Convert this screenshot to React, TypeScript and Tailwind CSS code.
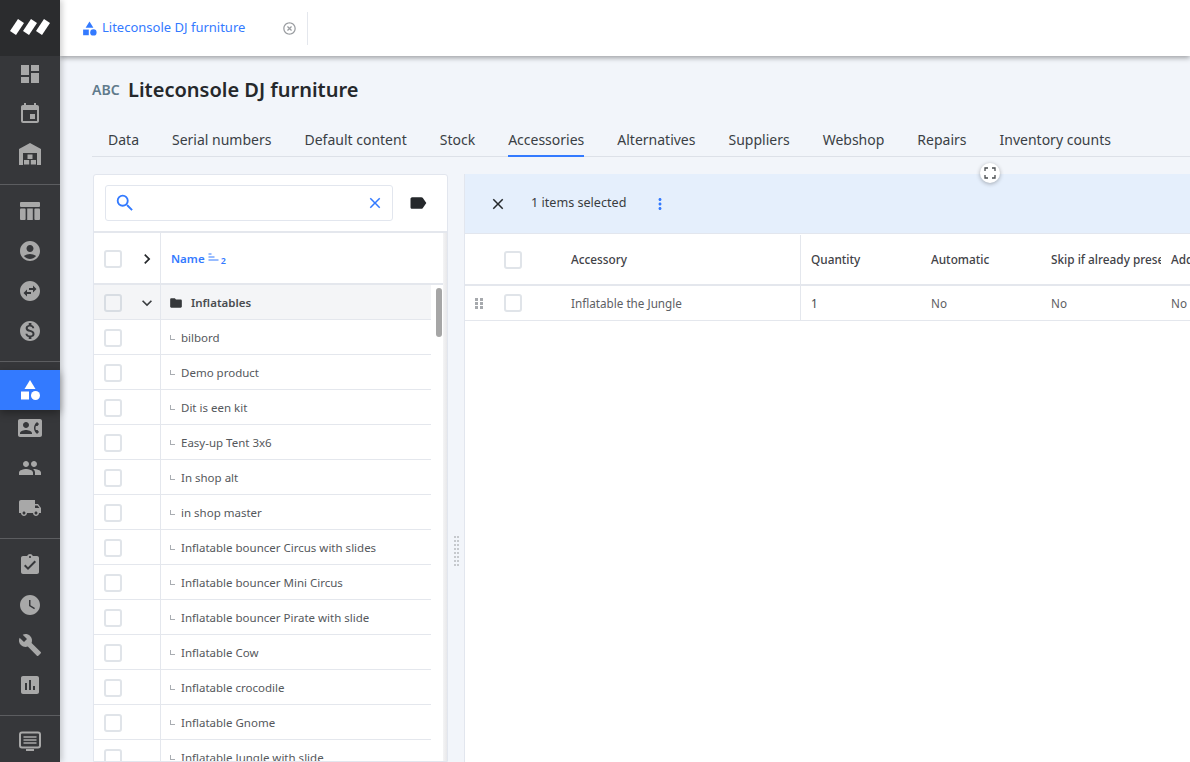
import {
  MdDashboard,
  MdEvent,
  MdAccountCircle,
  MdSwapHorizontalCircle,
  MdMonetizationOn,
  MdCategory,
  MdContactPhone,
  MdPeople,
  MdLocalShipping,
  MdAssignmentTurnedIn,
  MdWatchLater,
  MdBuild,
  MdAssessment,
  MdFolder,
  MdLabel,
  MdSearch,
  MdClose,
  MdMoreVert,
  MdHighlightOff,
  MdChevronRight,
  MdExpandMore,
} from "react-icons/md"

function WarehouseIcon({ className }: { className?: string }) {
  return (
    <svg viewBox="0 0 24 24" className={className} fill="currentColor">
      <path
        fillRule="evenodd"
        d="M12 1 L23 7 V23 H1 V7 Z M5 11 V23 H19 V11 Z"
      />
      <rect x="9.5" y="12.5" width="5" height="4.5" />
      <rect x="6" y="18" width="5.2" height="4.5" />
      <rect x="12.8" y="18" width="5.2" height="4.5" />
    </svg>
  )
}

function TableIcon({ className }: { className?: string }) {
  return (
    <svg viewBox="0 0 24 24" className={className} fill="currentColor">
      <rect x="2" y="3" width="20" height="5" rx="1" />
      <rect x="2" y="9.5" width="5.6" height="11.5" rx="1" />
      <rect x="9.2" y="9.5" width="5.6" height="11.5" />
      <rect x="16.4" y="9.5" width="5.6" height="11.5" rx="1" />
    </svg>
  )
}

function ScreenIcon({ className }: { className?: string }) {
  return (
    <svg viewBox="0 0 24 24" className={className} fill="none" stroke="currentColor">
      <rect x="2" y="3.5" width="20" height="15" rx="2" strokeWidth="2" />
      <path d="M5.5 8h13M5.5 11h13M5.5 14h13" strokeWidth="1.7" />
      <path d="M8 21h8" strokeWidth="2" />
    </svg>
  )
}

function NavItem({ icon: Icon, active }: { icon: any; active?: boolean }) {
  return (
    <div
      className={
        active
          ? "flex h-10 items-center justify-center bg-[#337aff] text-white shadow-[0_3px_8px_rgba(0,0,0,0.35)]"
          : "flex h-10 items-center justify-center text-[#a8a8a8]"
      }
    >
      <Icon className="h-6 w-6" />
    </div>
  )
}

function Sidebar() {
  return (
    <aside className="z-20 flex h-full w-[60px] shrink-0 flex-col bg-[#36373a] shadow-[2px_0_6px_rgba(0,0,0,0.2)]">
      <div className="z-10 flex h-[56px] shrink-0 items-center justify-center bg-[#2b2c2e]">
        <svg viewBox="0 0 60 56" className="h-[56px] w-[60px]" fill="#fff">
          <polygon points="18,19 24,23 16,35 10,31" />
          <polygon points="31,19 37,23 29,35 23,31" />
          <polygon points="44,19 50,23 42,35 36,31" />
        </svg>
      </div>
      <div className="-mt-[2px] border-b border-[#5c5d60] pb-[10px]">
        <NavItem icon={MdDashboard} />
        <NavItem icon={MdEvent} />
        <NavItem icon={WarehouseIcon} />
      </div>
      <div className="border-b border-[#5c5d60] pt-[6px] pb-[10px]">
        <NavItem icon={TableIcon} />
        <NavItem icon={MdAccountCircle} />
        <NavItem icon={MdSwapHorizontalCircle} />
        <NavItem icon={MdMonetizationOn} />
      </div>
      <div className="border-b border-[#5c5d60] pt-2 pb-[10px]">
        <NavItem icon={MdCategory} active />
        <div className="-mt-[2px]">
          <NavItem icon={MdContactPhone} />
          <NavItem icon={MdPeople} />
          <NavItem icon={MdLocalShipping} />
        </div>
      </div>
      <div className="border-b border-[#5c5d60] pt-[6px] pb-[10px]">
        <NavItem icon={MdAssignmentTurnedIn} />
        <NavItem icon={MdWatchLater} />
        <NavItem icon={MdBuild} />
        <NavItem icon={MdAssessment} />
      </div>
      <div className="pt-[5px]">
        <NavItem icon={ScreenIcon} />
      </div>
    </aside>
  )
}

function Checkbox({ dim }: { dim?: boolean }) {
  return (
    <div
      className={
        dim
          ? "h-[18px] w-[18px] rounded-[3px] border-2 border-[#d8dde3] bg-[#f4f5f7]"
          : "h-[18px] w-[18px] rounded-[3px] border-2 border-[#e0e4e9] bg-white"
      }
    />
  )
}

const tabs = [
  "Data",
  "Serial numbers",
  "Default content",
  "Stock",
  "Accessories",
  "Alternatives",
  "Suppliers",
  "Webshop",
  "Repairs",
  "Inventory counts",
]

const products = [
  "bilbord",
  "Demo product",
  "Dit is een kit",
  "Easy-up Tent 3x6",
  "In shop alt",
  "in shop master",
  "Inflatable bouncer Circus with slides",
  "Inflatable bouncer Mini Circus",
  "Inflatable bouncer Pirate with slide",
  "Inflatable Cow",
  "Inflatable crocodile",
  "Inflatable Gnome",
  "Inflatable Jungle with slide",
]

function ProductList() {
  return (
    <section className="relative flex h-full w-[355px] shrink-0 flex-col overflow-hidden rounded-t-[3px] border border-[#e2e6ee] bg-white">
      <div className="flex h-[58px] shrink-0 items-center border-b-2 border-[#e4e7ed] pl-[11px]">
        <div className="flex h-[36px] w-[288px] items-center justify-between rounded-[3px] border border-[#e2e6ee] pr-[8px] pl-[8px] text-[#337aff]">
          <MdSearch className="h-[22px] w-[22px]" />
          <MdClose className="h-[18px] w-[18px]" />
        </div>
        <MdLabel className="ml-[15px] h-[20px] w-[20px] text-[#25282b]" />
      </div>

      <div className="flex h-[52px] shrink-0 border-b-2 border-[#e4e7ed]">
        <div className="flex w-[67px] items-center border-r border-[#e4e7ed] pt-[2px] pl-[10px]">
          <Checkbox />
          <MdChevronRight className="ml-[15px] h-[20px] w-[20px] text-[#25282b]" />
        </div>
        <div className="flex items-center pt-px pl-[10px] text-[11.5px] font-semibold text-[#337aff]">
          Name
          <svg viewBox="0 0 11 8" className="ml-[3px] -mt-[3px] h-[8px] w-[11px]" stroke="currentColor" strokeWidth="1">
            <path d="M0.5 1h3M0.5 4h6M0.5 7h10" />
          </svg>
          <span className="ml-[2px] mt-[5px] text-[9px]">2</span>
        </div>
      </div>

      <div className="mr-[16px] flex h-[35px] shrink-0 border-b border-[#e4e7ed] bg-[#f4f5f7]">
        <div className="flex w-[67px] items-center border-r border-[#e4e7ed] pt-[2px] pl-[10px]">
          <Checkbox dim />
          <MdExpandMore className="ml-[15px] h-[20px] w-[20px] text-[#3a3d40]" />
        </div>
        <div className="flex items-center pt-px pl-[8px] text-[11.5px] font-semibold text-[#494c50]">
          <MdFolder className="mr-[8px] h-[14px] w-[14px] text-[#35383b]" />
          Inflatables
        </div>
      </div>

      {products.map((name) => (
        <div key={name} className="mr-[16px] flex h-[35px] shrink-0 border-b border-[#e4e7ed]">
          <div className="flex w-[67px] items-center border-r border-[#e4e7ed] pt-[2px] pl-[10px]">
            <Checkbox />
          </div>
          <div className="flex items-center pt-px pl-[9px] text-[11.5px] text-[#55585c]">
            <span className="mr-[6px] h-[5px] w-[5px] border-b border-l border-[#a9adb2]" />
            {name}
          </div>
        </div>
      ))}

      <div className="absolute top-[113px] right-[5px] h-[49px] w-[6px] rounded-full bg-[#a6a6a6]" />
      <div className="absolute top-[58px] right-0 bottom-0 w-[4px] bg-gradient-to-r from-[#f4f4f5] to-[#e8e8ea]" />
    </section>
  )
}

function Splitter() {
  return (
    <div className="flex w-[16px] shrink-0 justify-center pt-[362px]">
      <div className="grid h-fit grid-cols-2 gap-x-px gap-y-[2px]">
        {Array.from({ length: 16 }).map((_, i) => (
          <span key={i} className="h-[2px] w-[2px] bg-[#c6c9cd]" />
        ))}
      </div>
    </div>
  )
}

function AccessoryTable() {
  return (
    <section className="relative min-w-0 flex-1 border-l border-[#e2e6ee] bg-white">
      <div className="absolute -top-[11px] left-[515px] z-10 flex h-[20px] w-[20px] items-center justify-center rounded-full bg-white shadow-[0_1px_4px_rgba(0,0,0,0.3)]">
        <svg viewBox="0 0 12 12" className="h-[12px] w-[12px]" fill="none" stroke="#4a4d50" strokeWidth="1.3">
          <path d="M1 4V1h3M8 1h3v3M11 8v3H8M4 11H1V8" />
        </svg>
      </div>

      <div className="flex h-[60px] items-center border-b border-[#e2e6ee] bg-[#e5effc] text-[12.6px] text-[#3a3d40]">
        <MdClose className="ml-[24px] h-[18px] w-[18px] text-[#25282b]" />
        <span className="ml-[24px]">1 items selected</span>
        <MdMoreVert className="ml-[25px] h-[18px] w-[18px] text-[#337aff]" />
      </div>

      <div className="flex h-[52px] items-center overflow-hidden border-b-2 border-[#e4e7ed] pt-px text-[11.8px] font-medium text-[#3f4247]">
        <div className="flex h-full w-[336px] shrink-0 items-center border-r border-[#e4e7ed] pl-[39px]">
          <Checkbox />
          <span className="ml-[49px]">Accessory</span>
        </div>
        <span className="w-[120px] shrink-0 pl-[10px]">Quantity</span>
        <span className="w-[120px] shrink-0 pl-[10px]">Automatic</span>
        <span className="w-[120px] shrink-0 overflow-hidden pl-[10px] whitespace-nowrap">Skip if already present</span>
        <span className="w-[30px] shrink-0 overflow-hidden pl-[10px]">Add</span>
      </div>

      <div className="flex h-[35px] items-center overflow-hidden border-b border-[#e4e7ed] text-[11.7px] text-[#5d6064]">
        <div className="flex h-full w-[336px] shrink-0 items-center border-r border-[#e4e7ed] pl-[10px]">
          <div className="grid w-[29px] grid-cols-[repeat(2,3px)] gap-x-[2px] gap-y-px">
            {Array.from({ length: 6 }).map((_, i) => (
              <span key={i} className="h-[3px] w-[3px] bg-[#a6a9ad]" />
            ))}
          </div>
          <Checkbox />
          <span className="ml-[49px] pt-px">Inflatable the Jungle</span>
        </div>
        <span className="w-[120px] shrink-0 pt-px pl-[10px] text-[#45484c]">1</span>
        <span className="w-[120px] shrink-0 pt-px pl-[10px]">No</span>
        <span className="w-[120px] shrink-0 pt-px pl-[10px]">No</span>
        <span className="w-[30px] shrink-0 pt-px pl-[10px]">No</span>
      </div>
    </section>
  )
}

export default function App() {
  return (
    <div className="flex h-screen w-full overflow-hidden bg-[#f2f5fa] font-['Noto_Sans',sans-serif]">
      <Sidebar />
      <div className="flex min-w-0 flex-1 flex-col">
        <header className="z-10 flex h-[56px] shrink-0 items-center bg-white shadow-[0_2px_5px_rgba(0,0,0,0.35)]">
          <div className="flex h-[33px] w-[248px] items-center border-r border-[#e4e7ed] pl-[21px]">
            <MdCategory className="h-[17px] w-[17px] text-[#337aff]" />
            <span className="ml-[4px] w-[180px] text-[13px] text-[#337aff]">Liteconsole DJ furniture</span>
            <MdHighlightOff className="h-[15px] w-[15px] text-[#9a9da1]" />
          </div>
        </header>

        <main className="flex min-h-0 flex-1 flex-col pl-[32px]">
          <div className="flex h-[67px] shrink-0 items-center">
            <span className="w-[36px] text-[14px] font-semibold text-[#607a8b]">ABC</span>
            <h1 className="text-[20px] font-semibold text-[#25282b]">Liteconsole DJ furniture</h1>
          </div>

          <nav className="flex h-[34px] shrink-0 gap-[33px] border-b border-[#dde1e8] pl-[16px] text-[14px] text-[#3a3f45]">
            {tabs.map((t) =>
              t === "Accessories" ? (
                <span key={t} className="-mb-px flex h-[34px] items-center border-b-2 border-[#337aff]">
                  {t}
                </span>
              ) : (
                <span key={t} className="flex h-[33px] items-center">
                  {t}
                </span>
              )
            )}
          </nav>

          <div className="mt-[17px] flex min-h-0 flex-1 pl-px">
            <ProductList />
            <Splitter />
            <AccessoryTable />
          </div>
        </main>
      </div>
    </div>
  )
}
